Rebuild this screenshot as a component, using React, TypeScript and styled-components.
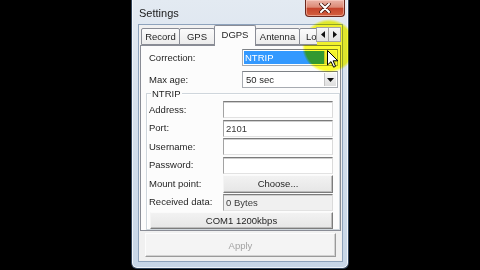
import styled, { createGlobalStyle } from 'styled-components';

const GlobalStyle = createGlobalStyle`
  html, body {
    margin: 0;
    padding: 0;
    width: 480px;
    height: 270px;
    overflow: hidden;
    background: #000;
  }
  body {
    font-family: 'Liberation Sans', Arial, sans-serif;
    font-size: 9.5px;
    color: #1f1f1f;
  }
`;

const Screen = styled.div`
  width: 480px;
  height: 270px;
  display: flex;
  justify-content: center;
  align-items: flex-start;
`;

const Window = styled.div`
  position: relative;
  width: 218px;
  height: 269px;
  box-sizing: border-box;
  display: flex;
  flex-direction: column;
  border: 1px solid #34465c;
  border-top: none;
  border-radius: 0 0 6px 6px;
  background: linear-gradient(180deg, #e3eaf2 0%, #d5e0ec 40%, #c7d6e7 100%);
  box-shadow: inset 1px 0 0 #f4f8fc, inset -1px 0 0 #f4f8fc, inset 0 -1px 0 #eef3f9;
`;

const TitleBar = styled.div`
  height: 24px;
  flex-shrink: 0;
  display: flex;
  align-items: flex-start;
  justify-content: space-between;
  padding: 0 3px 0 7px;
`;

const Title = styled.span`
  font-size: 11px;
  line-height: 26px;
  color: #1a1a1a;
`;

const CloseButton = styled.div`
  width: 40px;
  height: 17px;
  box-sizing: border-box;
  display: flex;
  align-items: center;
  justify-content: center;
  border: 1px solid #6a271d;
  border-top: none;
  border-radius: 0 0 4px 4px;
  background: linear-gradient(180deg, #ebb4a8 0%, #dc8a76 45%, #c5442c 52%, #d4603f 100%);
  box-shadow: inset 0 0 0 1px rgba(255, 220, 210, 0.5);
`;

const Client = styled.div`
  flex: 1;
  margin: 0 5px 6px 6px;
  border: 1px solid #8ea3bc;
  background: #f0f0f0;
  padding: 0 1px;
  display: flex;
  flex-direction: column;
`;

const TabStrip = styled.div`
  position: relative;
  z-index: 1;
  height: 21px;
  margin-bottom: -1px;
  display: flex;
  padding-left: 1px;
`;

const TabList = styled.div`
  flex: 1;
  display: flex;
  align-items: flex-end;
  overflow: hidden;
`;

const Tab = styled.div<{ $active?: boolean; $width: number }>`
  flex-shrink: 0;
  width: ${({ $width }) => $width}px;
  height: ${({ $active }) => ($active ? '21px' : '17px')};
  margin-bottom: ${({ $active }) => ($active ? '0' : '1px')};
  margin-right: -1px;
  box-sizing: border-box;
  border: 1px solid #898c95;
  border-bottom: ${({ $active }) => ($active ? 'none' : '1px solid #898c95')};
  border-radius: 2px 2px 0 0;
  background: ${({ $active }) =>
    $active ? '#fcfcfc' : 'linear-gradient(180deg, #fbfbfb 0%, #ececec 100%)'};
  text-align: center;
  line-height: ${({ $active }) => ($active ? '17px' : '15px')};
  white-space: nowrap;
  color: #1f1f1f;
`;

const ArrowGroup = styled.div`
  display: flex;
  align-self: flex-start;
  margin-top: 2px;
`;

const ArrowButton = styled.div`
  width: 13px;
  height: 15px;
  box-sizing: border-box;
  display: flex;
  align-items: center;
  justify-content: center;
  border: 1px solid #a3a3a3;
  background: linear-gradient(180deg, #f7f7f7, #e2e2e2);
  margin-left: -1px;
`;

const Panel = styled.div`
  height: 186px;
  box-sizing: border-box;
  border: 1px solid #898c95;
  background: #fcfcfc;
  padding: 3px 0 0 5px;
  display: flex;
  flex-direction: column;
`;

const FieldRow = styled.div<{ $gap?: number }>`
  display: grid;
  grid-template-columns: 1fr 96px;
  align-items: center;
  height: 17px;
  padding: 0 2px 0 3px;
  margin-top: ${({ $gap }) => $gap ?? 0}px;
`;

const Label = styled.span`
  line-height: 12px;
  color: #1f1f1f;
  white-space: nowrap;
`;

const Combo = styled.div`
  height: 17px;
  box-sizing: border-box;
  display: flex;
  border: 1px solid #a7abb1;
  border-top-color: #7d8186;
  background: #fff;
  padding: 1px;
`;

const ComboValue = styled.div<{ $selected?: boolean }>`
  flex: 1;
  padding-left: ${({ $selected }) => ($selected ? '1px' : '2px')};
  line-height: 13px;
  background: ${({ $selected }) => ($selected ? '#3399ff' : 'transparent')};
  color: ${({ $selected }) => ($selected ? '#ffffff' : '#1f1f1f')};
`;

const ComboButton = styled.div`
  width: 11px;
  display: flex;
  align-items: center;
  justify-content: center;
  background: linear-gradient(180deg, #f6f6f6, #dedede);
  border-left: 1px solid #c4c4c4;
`;

const GroupBox = styled.div`
  margin-top: 5px;
  border: 1px solid #cfd6dc;
  box-shadow: inset 1px 1px 0 #fff;
  padding: 0 6px 0 2px;
`;

const GroupTitle = styled.span`
  display: block;
  width: fit-content;
  margin: -6px 0 0 2px;
  padding: 0 1px;
  line-height: 11px;
  background: #fcfcfc;
`;

const GroupGrid = styled.div`
  margin-top: 2px;
  display: grid;
  grid-template-columns: 74px 110px;
  grid-template-rows: repeat(7, 17px);
  row-gap: 1.5px;
  align-items: center;
`;

const TextBox = styled.div<{ $readonly?: boolean }>`
  height: 17px;
  box-sizing: border-box;
  border-top: 1px solid #7b7b7b;
  border-left: 1px solid #a3a3a3;
  border-right: 1px solid #dadada;
  border-bottom: 1px solid #e2e2e2;
  box-shadow: inset 0 1px 0 #cfcfcf;
  background: ${({ $readonly }) => ($readonly ? '#f0f0f0' : '#ffffff')};
  padding-left: 2px;
  line-height: 15px;
  color: #3a3a3a;
`;

const PushButton = styled.div<{ $wide?: boolean; $disabled?: boolean }>`
  box-sizing: border-box;
  height: ${({ $wide }) => ($wide ? '17px' : '18px')};
  grid-column: ${({ $wide }) => ($wide ? '1 / -1' : 'auto')};
  margin-left: ${({ $wide }) => ($wide ? '1px' : '0')};
  display: flex;
  align-items: center;
  justify-content: center;
  border: 1px solid;
  border-color: #fafafa #7c7c7c #7c7c7c #f4f4f4;
  box-shadow: inset -1px -1px 0 #bdbdbd;
  background: linear-gradient(180deg, #f2f2f2 0%, #e6e6e6 100%);
  color: ${({ $disabled }) => ($disabled ? '#a3a3a3' : '#1f1f1f')};
`;

const ApplyButton = styled(PushButton)`
  height: 24px;
  margin: 2px 5px 0 5px;
  background: #f4f4f4;
  border-color: #fcfcfc #9a9a9a #9a9a9a #fcfcfc;
  box-shadow: inset -1px -1px 0 #d2d2d2;
`;

const Spotlight = styled.div`
  position: absolute;
  left: 170px;
  top: 19px;
  width: 54px;
  height: 54px;
  border-radius: 50%;
  background: radial-gradient(circle, #ffff30 0, #ffff30 24px, rgba(255, 255, 48, 0) 27px);
  mix-blend-mode: multiply;
  pointer-events: none;
`;

const Pointer = styled.svg`
  position: absolute;
  left: 195px;
  top: 50px;
  pointer-events: none;
`;

const Triangle = ({ dir }: { dir: 'left' | 'right' | 'down' }) => {
  const pts =
    dir === 'left' ? '4,0 4,7 0,3.5' : dir === 'right' ? '0,0 0,7 4,3.5' : '0,0 7,0 3.5,4';
  const w = dir === 'down' ? 7 : 4;
  const h = dir === 'down' ? 4 : 7;
  return (
    <svg width={w} height={h} viewBox={`0 0 ${w} ${h}`}>
      <polygon points={pts} fill="#111" />
    </svg>
  );
};

const tabs = [
  { name: 'Record', width: 39 },
  { name: 'GPS', width: 36 },
  { name: 'DGPS', width: 42 },
  { name: 'Antenna', width: 45 },
  { name: 'Location', width: 50 },
];

export default function App() {
  return (
    <>
      <GlobalStyle />
      <Screen>
        <Window>
          <TitleBar>
            <Title>Settings</Title>
            <CloseButton>
              <svg width="12" height="10" viewBox="0 0 12 10">
                <path d="M2 1 L10 9 M10 1 L2 9" stroke="#4a1810" strokeWidth="3.6" strokeLinecap="round" />
                <path d="M2 1 L10 9 M10 1 L2 9" stroke="#ffffff" strokeWidth="2" strokeLinecap="round" />
              </svg>
            </CloseButton>
          </TitleBar>
          <Client>
            <TabStrip>
              <TabList>
                {tabs.map((t) => (
                  <Tab key={t.name} $width={t.width} $active={t.name === 'DGPS'}>
                    {t.name}
                  </Tab>
                ))}
              </TabList>
              <ArrowGroup>
                <ArrowButton>
                  <Triangle dir="left" />
                </ArrowButton>
                <ArrowButton>
                  <Triangle dir="right" />
                </ArrowButton>
              </ArrowGroup>
            </TabStrip>
            <Panel>
              <FieldRow>
                <Label>Correction:</Label>
                <Combo>
                  <ComboValue $selected>NTRIP</ComboValue>
                  <ComboButton>
                    <Triangle dir="down" />
                  </ComboButton>
                </Combo>
              </FieldRow>
              <FieldRow $gap={5}>
                <Label>Max age:</Label>
                <Combo>
                  <ComboValue>50 sec</ComboValue>
                  <ComboButton>
                    <Triangle dir="down" />
                  </ComboButton>
                </Combo>
              </FieldRow>
              <GroupBox>
                <GroupTitle>NTRIP</GroupTitle>
                <GroupGrid>
                  <Label>Address:</Label>
                  <TextBox />
                  <Label>Port:</Label>
                  <TextBox>2101</TextBox>
                  <Label>Username:</Label>
                  <TextBox />
                  <Label>Password:</Label>
                  <TextBox />
                  <Label>Mount point:</Label>
                  <PushButton>Choose...</PushButton>
                  <Label>Received data:</Label>
                  <TextBox $readonly>0 Bytes</TextBox>
                  <PushButton $wide>COM1 1200kbps</PushButton>
                </GroupGrid>
              </GroupBox>
            </Panel>
            <ApplyButton $disabled>Apply</ApplyButton>
          </Client>
          <Spotlight />
          <Pointer width="12" height="18" viewBox="0 0 12 18">
            <path
              d="M0.5 0.5 L0.5 15 L4 11.6 L6.6 17.2 L8.6 16.3 L6.1 10.8 L10.8 10.8 Z"
              fill="#ffffff"
              stroke="#000000"
              strokeWidth="1"
              strokeLinejoin="round"
            />
          </Pointer>
        </Window>
      </Screen>
    </>
  );
}
